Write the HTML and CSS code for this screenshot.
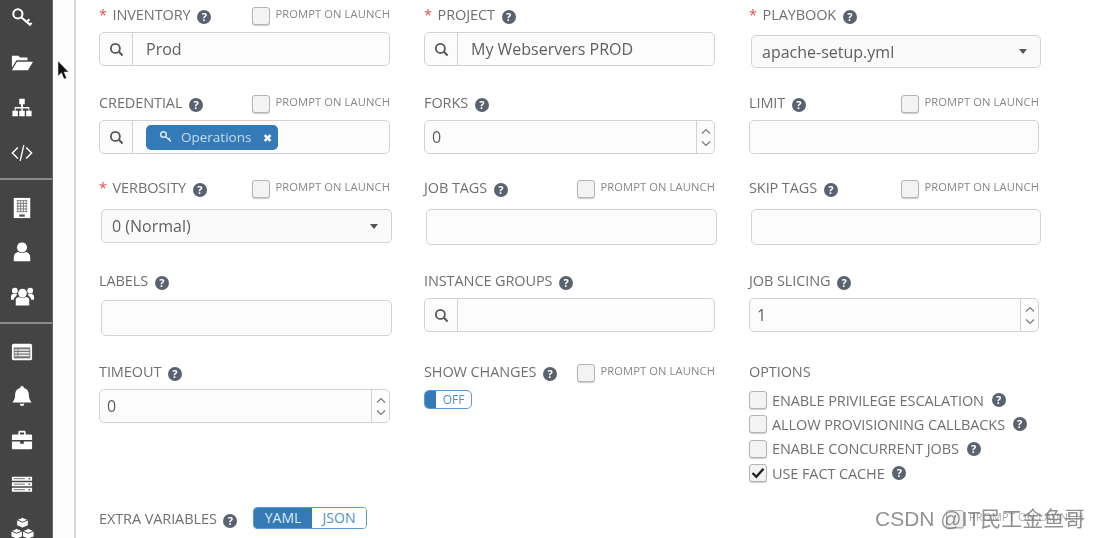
FILE: index.html
```html
<!DOCTYPE html>
<html lang="en">
<head>
<meta charset="utf-8">
<title>Job Template</title>
<link rel="stylesheet" href="styles.css">
</head>
<body>
<div class="page">
  <nav class="sidebar">
    <div class="group first">
      <div class="item"><svg viewBox="0 0 24 24"><circle cx="7.500" cy="7.500" r="5" fill="none" stroke="#fff" stroke-width="2.300"/><path d="M11.500 11.500l10 8.500M17 16.500l3-3.200M20.500 19.500l2-2.200" fill="none" stroke="#fff" stroke-width="2.300"/></svg></div>
      <div class="item"><svg viewBox="0 0 24 24"><path d="M1 4h7l2 2h8v3H6L1 17zM6.500 10.500H24L18.500 20H1z" fill="#fff"/></svg></div>
      <div class="item"><svg viewBox="0 0 24 24"><path d="M9 2h6v6h-2v3h7v4h2.500v6h-6v-6H19v-2.500h-6.200V15H15v6H9v-6h2.200v-2.500H5V15h2.500v6h-6v-6H4v-4h7V8H9z" fill="#fff"/></svg></div>
      <div class="item"><svg viewBox="0 0 24 24"><path d="M7.500 6L1.500 12l6 6M16.500 6l6 6-6 6M14 3.500L10 20.500" fill="none" stroke="#fff" stroke-width="1.500"/></svg></div>
    </div>
    <div class="group second">
      <div class="item"><svg viewBox="0 0 24 24"><path d="M3 1h18v22H3z" fill="#fff"/><path d="M6 4h12M6 7h12M6 10h12M6 13h12M6 16h12M7.500 4v12M10.500 4v12M13.500 4v12M16.500 4v12" stroke="#777" stroke-width="1"/><path d="M9 19h6v2.500H9z" fill="#555"/></svg></div>
      <div class="item"><svg viewBox="0 0 24 24"><circle cx="12" cy="7" r="5.500" fill="#fff"/><path d="M3 22v-4c0-4 3-6 5-6 2 1.500 6 1.500 8 0 2 0 5 2 5 6v4z" fill="#fff"/></svg></div>
      <div class="item"><svg class="wide" viewBox="0 0 26 24"><circle cx="13" cy="9" r="4.500" fill="#fff"/><circle cx="5" cy="6.500" r="3" fill="#fff"/><circle cx="21" cy="6.500" r="3" fill="#fff"/><path d="M6 22v-6c0-2 2-3 3.500-3 2 1.200 5 1.200 7 0 1.500 0 3.500 1 3.500 3v6zM1 16v-3c0-2 1-3 2.500-3h4c-.5 1-1 2-2 3-1.500 1-1.500 2-1.500 3zM25 16v-3c0-2-1-3-2.500-3h-4c.5 1 1 2 2 3 1.500 1 1.500 2 1.500 3z" fill="#fff"/></svg></div>
    </div>
    <div class="group">
      <div class="item"><svg viewBox="0 0 24 24"><rect x="1" y="3" width="22" height="18" rx="2" fill="#fff"/><path d="M3 7h18v12H3z" fill="#777"/><path d="M4 9h3v1.500H4zM4 12h3v1.500H4zM4 15h3v1.500H4zM8 9h12v1.500H8zM8 12h12v1.500H8zM8 15h12v1.500H8z" fill="#eee"/></svg></div>
      <div class="item"><svg viewBox="0 0 24 24"><path d="M12 1a2 2 0 012 2.200c4 1 5.500 4 5.500 8 0 4 1.500 5.500 3 7.800h-21c1.500-2.300 3-3.800 3-7.800 0-4 1.500-7 5.500-8A2 2 0 0112 1zM9.500 20.500h5A2.500 2.500 0 0112 23a2.500 2.500 0 01-2.500-2.500z" fill="#fff"/></svg></div>
      <div class="item"><svg viewBox="0 0 24 24"><path d="M8 6V3.500A1.500 1.500 0 019.500 2h5A1.500 1.500 0 0116 3.500V6h6a1 1 0 011 1v5H1V7a1 1 0 011-1zm1.800 0h4.400V3.800H9.800zM1 13.500h9V16h4v-2.500h9V21a1 1 0 01-1 1H2a1 1 0 01-1-1z" fill="#fff"/></svg></div>
      <div class="item"><svg viewBox="0 0 24 24"><path d="M1 4h22v4.500H1zM1 10h22v4.500H1zM1 16h22v4.500H1z" fill="#fff"/><path d="M3 6.200h12M3 12.200h12M3 18.200h12" stroke="#666" stroke-width="1"/><path d="M19 5.500h2v1.500h-2zM19 11.500h2v1.500h-2zM19 17.500h2v1.500h-2z" fill="#666"/></svg></div>
      <div class="item"><svg class="wide" viewBox="0 0 26 24"><path d="M13 1l6 2.500v6L13 12l-6-2.500v-6zM7 12.500l6 2.500v6l-6 2.500L1 21v-6zM19 12.500l6 2.500v6l-6 2.500-6-2.500v-6z" fill="#fff" stroke="#444" stroke-width="1"/><path d="M7 3.500l6 2.500 6-2.500M1 15l6 2.500 6-2.500M13 15l6 2.500 6-2.500" fill="none" stroke="#444" stroke-width="1"/></svg></div>
    </div>
  </nav>
  <div class="gutter"></div>
  <main class="form">
    <div class="grid">
      <section class="field">
        <div class="head"><label class="label"><b class="req">*</b> INVENTORY <i class="help">?</i></label><span class="prompt"><span class="box"></span>PROMPT ON LAUNCH</span></div>
        <div class="control lookup"><span class="search"><svg viewBox="0 0 16 16"><circle cx="6.800" cy="6.800" r="4.800" fill="none" stroke="#555" stroke-width="1.900"/><path d="M10.500 10.500l4 4" stroke="#555" stroke-width="2.200"/></svg></span><span class="value pad">Prod</span></div>
      </section>
      <section class="field">
        <div class="head"><label class="label"><b class="req">*</b> PROJECT <i class="help">?</i></label></div>
        <div class="control lookup"><span class="search"><svg viewBox="0 0 16 16"><circle cx="6.800" cy="6.800" r="4.800" fill="none" stroke="#555" stroke-width="1.900"/><path d="M10.500 10.500l4 4" stroke="#555" stroke-width="2.200"/></svg></span><span class="value pad">My Webservers PROD</span></div>
      </section>
      <section class="field">
        <div class="head"><label class="label"><b class="req">*</b> PLAYBOOK <i class="help">?</i></label></div>
        <div class="control select drop-a"><span class="value">apache-setup.yml</span><span class="caret"></span></div>
      </section>

      <section class="field">
        <div class="head"><label class="label">CREDENTIAL <i class="help">?</i></label><span class="prompt"><span class="box"></span>PROMPT ON LAUNCH</span></div>
        <div class="control lookup"><span class="search"><svg viewBox="0 0 16 16"><circle cx="6.800" cy="6.800" r="4.800" fill="none" stroke="#555" stroke-width="1.900"/><path d="M10.500 10.500l4 4" stroke="#555" stroke-width="2.200"/></svg></span>
          <span class="tag"><svg viewBox="0 0 14 14"><circle cx="4.500" cy="4.500" r="2.800" fill="none" stroke="#dbe9f5" stroke-width="1.500"/><path d="M6.500 6.500l5.500 5M9.500 9.500l1.500-1.500" stroke="#dbe9f5" stroke-width="1.500"/></svg><span class="tag-text">Operations</span><span class="tag-x">✖</span></span></div>
      </section>
      <section class="field">
        <div class="head"><label class="label">FORKS <i class="help">?</i></label></div>
        <div class="control number"><span class="value">0</span><span class="spin"><svg viewBox="0 0 10 7"><path d="M1 5.500l4-4 4 4" fill="none" stroke="#777" stroke-width="1.100"/></svg><svg viewBox="0 0 10 7"><path d="M1 1.500l4 4 4-4" fill="none" stroke="#777" stroke-width="1.100"/></svg></span></div>
      </section>
      <section class="field">
        <div class="head"><label class="label">LIMIT <i class="help">?</i></label><span class="prompt"><span class="box"></span>PROMPT ON LAUNCH</span></div>
        <div class="control"></div>
      </section>

      <section class="field">
        <div class="head"><label class="label"><b class="req">*</b> VERBOSITY <i class="help">?</i></label><span class="prompt"><span class="box"></span>PROMPT ON LAUNCH</span></div>
        <div class="control select drop-b"><span class="value">0 (Normal)</span><span class="caret"></span></div>
      </section>
      <section class="field">
        <div class="head"><label class="label">JOB TAGS <i class="help">?</i></label><span class="prompt"><span class="box"></span>PROMPT ON LAUNCH</span></div>
        <div class="control drop-b tall"></div>
      </section>
      <section class="field">
        <div class="head"><label class="label">SKIP TAGS <i class="help">?</i></label><span class="prompt"><span class="box"></span>PROMPT ON LAUNCH</span></div>
        <div class="control drop-b tall"></div>
      </section>

      <section class="field">
        <div class="head"><label class="label">LABELS <i class="help">?</i></label></div>
        <div class="control drop-c tall"></div>
      </section>
      <section class="field">
        <div class="head"><label class="label">INSTANCE GROUPS <i class="help">?</i></label></div>
        <div class="control lookup"><span class="search"><svg viewBox="0 0 16 16"><circle cx="6.800" cy="6.800" r="4.800" fill="none" stroke="#555" stroke-width="1.900"/><path d="M10.500 10.500l4 4" stroke="#555" stroke-width="2.200"/></svg></span></div>
      </section>
      <section class="field">
        <div class="head"><label class="label">JOB SLICING <i class="help">?</i></label></div>
        <div class="control number"><span class="value">1</span><span class="spin"><svg viewBox="0 0 10 7"><path d="M1 5.500l4-4 4 4" fill="none" stroke="#777" stroke-width="1.100"/></svg><svg viewBox="0 0 10 7"><path d="M1 1.500l4 4 4-4" fill="none" stroke="#777" stroke-width="1.100"/></svg></span></div>
      </section>

      <section class="field">
        <div class="head"><label class="label">TIMEOUT <i class="help">?</i></label></div>
        <div class="control number"><span class="value">0</span><span class="spin"><svg viewBox="0 0 10 7"><path d="M1 5.500l4-4 4 4" fill="none" stroke="#777" stroke-width="1.100"/></svg><svg viewBox="0 0 10 7"><path d="M1 1.500l4 4 4-4" fill="none" stroke="#777" stroke-width="1.100"/></svg></span></div>
      </section>
      <section class="field">
        <div class="head"><label class="label">SHOW CHANGES <i class="help">?</i></label><span class="prompt"><span class="box"></span>PROMPT ON LAUNCH</span></div>
        <div class="switch"><span class="knob"></span><span class="off">OFF</span></div>
      </section>
      <section class="field">
        <div class="head"><label class="label">OPTIONS</label></div>
        <ul class="options">
          <li><span class="box"></span>ENABLE PRIVILEGE ESCALATION <i class="help">?</i></li>
          <li><span class="box"></span>ALLOW PROVISIONING CALLBACKS <i class="help">?</i></li>
          <li><span class="box"></span>ENABLE CONCURRENT JOBS <i class="help">?</i></li>
          <li><span class="box"><svg viewBox="0 0 14 12"><path d="M1.500 6l3.800 3.800L12.500 1.800" fill="none" stroke="#222" stroke-width="2.400"/></svg></span>USE FACT CACHE <i class="help">?</i></li>
        </ul>
      </section>
    </div>
    <div class="extra">
      <label class="label">EXTRA VARIABLES <i class="help">?</i></label>
      <div class="segment"><span class="seg on">YAML</span><span class="seg">JSON</span></div>
      <span class="prompt faint"><span class="box"></span>PROMPT ON LAUNCH</span>
    </div>
  </main>
</div>
<svg class="cursor" viewBox="0 0 12 20"><path d="M1 0v15l3.500-3.200L7 18l2.500-1-2.500-6h4.500z" fill="#111" stroke="#ddd" stroke-width=".5"/></svg>
<div class="watermark">CSDN @IT民工金鱼哥</div>
</body>
</html>
```
FILE: styles.css
```css
* { box-sizing: border-box; }
html, body { margin: 0; height: 100%; overflow: hidden; background: #fff; }
body { font-family: "Open Sans", sans-serif; color: #707070; position: relative; }

.page { display: flex; height: 538px; overflow: hidden; filter: blur(.5px); }

.sidebar { width: 53px; flex: none; background: #444; border-right: 1px solid #6a6a6a; }
.group { padding: 6px 0 5px; border-bottom: 2px solid #8b8b8b; }
.group:last-child { border-bottom: 0; }
.group.first { margin-top: -10.500px; padding-bottom: 2.500px; }
.group.first .item { height: 45px; }
.group.second { padding-bottom: 4px; }
.item { height: 44px; display: flex; align-items: center; justify-content: center; padding-right: 8px; }
.item svg { width: 22px; height: 22px; flex: none; }
.item svg.wide { width: 25px; height: 24px; }

.gutter { width: 23px; flex: none; background: #fdfdfd; border-right: 2px solid #d8d8d8; }

.form { flex: 1; padding: 4px 0 0 23px; }
.grid { display: grid; grid-template-columns: 325px 325px 290px; grid-template-rows: 88px 85px 93px 91px 147px; }
.field { width: 291px; }
.field:nth-child(3n) { width: 290px; }
.head { height: 22px; margin-bottom: 6px; display: flex; align-items: center; justify-content: space-between; }
.label { font-size: 14.500px; line-height: 22px; color: #707070; white-space: nowrap; letter-spacing: -.1px; }
.req { color: #d9534f; font-weight: 400; margin-right: 2px; }
.help { display: inline-flex; width: 14px; height: 14px; margin-left: 3px; border-radius: 50%; background: #5a6270; color: #fff; font: 700 11px/14px "Open Sans", sans-serif; align-items: center; justify-content: center; vertical-align: -1px; }

.prompt { display: flex; align-items: center; margin-top: -2px; font-size: 11.200px; color: #888; letter-spacing: .1px; white-space: nowrap; line-height: 14px; }
.box { flex: none; display: inline-flex; align-items: center; justify-content: center; width: 18px; height: 18px; margin-right: 5px; border: 1px solid #b5b5b5; border-radius: 3px; background: #f3f3f3; box-shadow: 0 1px 1px #ccc; }
.box svg { width: 14px; height: 12px; }
.prompt .box { margin-top: 3px; }

.control { display: flex; align-items: stretch; height: 34px; border: 1px solid #d2d2d2; border-radius: 5px; background: #fcfcfc; font-size: 16px; color: #5f5f5f; }
.tall { height: 36px; }
.drop-a { margin: 9px 0 0 2px; height: 33px; width: 290px; }
.drop-b { margin: 10px 0 0 2px; width: 291px; }
.drop-c { margin: 8px 0 0 2px; width: 291px; }
.field:nth-child(3n) .drop-b { width: 290px; }
.select { justify-content: space-between; align-items: center; padding: 0 13px 0 10px; background: #fafafa; }
.drop-b.select { height: 34px; }
.caret { border: 4.500px solid transparent; border-top: 5px solid #555; border-bottom: 0; }
.value { align-self: center; }
.pad { padding-left: 13px; }
.search { width: 33px; flex: none; display: flex; align-items: center; justify-content: center; border-right: 1px solid #d2d2d2; }
.search svg { width: 15px; height: 15px; }
.number { justify-content: space-between; padding-left: 7px; }
.spin { width: 18px; flex: none; display: flex; flex-direction: column; justify-content: space-around; align-items: center; border-left: 1px solid #d2d2d2; padding: 4px 0; }
.spin svg { width: 10px; height: 7px; }

.tag { align-self: center; display: flex; align-items: center; height: 25px; margin-left: 13px; padding: 0 5px 0 13px; border-radius: 5px; background: #337ab7; font-size: 13.500px; color: #c6dcef; }
.tag svg { width: 14px; height: 14px; margin-right: 8px; }
.tag-x { font-size: 11px; color: #fff; margin-left: 12px; padding-right: 1px; }

.switch { display: flex; width: 48px; height: 19px; margin-top: 7px; border: 1px solid #5b9bd5; border-radius: 5px; overflow: hidden; background: #fff; }
.knob { width: 11px; background: #337ab7; }
.off { flex: 1; text-align: center; font-size: 12px; line-height: 17px; color: #4f8fc9; }

.options { list-style: none; margin: -1px 0 0; padding: 0; }
.options li { display: flex; align-items: center; height: 24.300px; font-size: 14.500px; color: #707070; white-space: pre; letter-spacing: -.1px; }
.options .help { margin-left: 4px; }

.extra { display: flex; align-items: center; height: 24px; margin-top: -2px; }
.extra .label { width: 154px; margin-top: 1px; }
.segment { display: flex; width: 114px; height: 22px; border: 1px solid #5b9bd5; border-radius: 4px; overflow: hidden; font-size: 14px; line-height: 20px; color: #4f8fc9; }
.seg { flex: 1; text-align: center; background: #fff; }
.seg.on { flex: none; width: 58px; background: #337ab7; color: #dce9f5; }
.extra .prompt { margin-left: 579px; }
.faint { color: #b0b0b0; }

.cursor { position: absolute; left: 57px; top: 61px; width: 12px; height: 20px; }
.watermark { position: absolute; left: 875px; top: 504px; font: 21px/30px "Liberation Sans", "Noto Sans CJK SC", sans-serif; color: rgba(110,110,110,.75); white-space: nowrap; }
```
